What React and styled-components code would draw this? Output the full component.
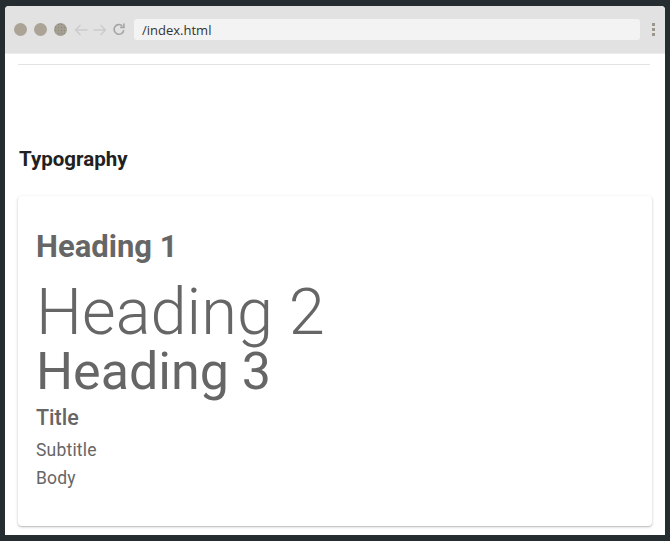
import styled, { createGlobalStyle } from "styled-components";

const GlobalStyle = createGlobalStyle`
  html, body {
    margin: 0;
    padding: 0;
    background: #262d31;
  }
  body {
    font-family: Roboto, "Liberation Sans", sans-serif;
  }
`;

const Page = styled.div`
  height: 541px;
  box-sizing: border-box;
  padding: 6px 5px 6px 5px;
  display: flex;
`;

const Window = styled.div`
  flex: 1;
  display: flex;
  flex-direction: column;
  background: #fff;
  border-radius: 4px 4px 0 0;
  overflow: hidden;
`;

const Toolbar = styled.div`
  height: 48px;
  flex-shrink: 0;
  background: #e2e2e2;
  border-bottom: 1px solid #ececec;
  display: flex;
  align-items: center;
  padding: 0 10px 0 9px;
  box-sizing: border-box;
`;

const Lights = styled.div`
  display: flex;
  gap: 7px;
  margin-right: 7px;
`;

const Light = styled.span`
  width: 13px;
  height: 13px;
  border-radius: 50%;
  background: ${(p) => (p.$dotted ? "#a39d92" : "#aba496")};
  background-image: ${(p) =>
    p.$dotted ? "radial-gradient(#8b857a 0.8px, transparent 1px)" : "none"};
  background-size: 3px 3px;
`;

const Nav = styled.div`
  display: flex;
  align-items: center;
  gap: 5px;
  margin-right: 8px;
`;

const NavButton = styled.span`
  display: flex;
  width: 14px;
  height: 16px;
  align-items: center;
  justify-content: center;
  color: ${(p) => p.$color || "#cbcbcb"};
`;

const UrlBar = styled.div`
  flex: 1;
  height: 21px;
  background: #f3f3f3;
  border-radius: 3px;
  display: flex;
  align-items: center;
  padding-left: 8px;
  font-family: "Open Sans", Roboto, sans-serif;
  font-size: 13px;
  color: #333;
`;

const MoreDots = styled.div`
  display: flex;
  flex-direction: column;
  gap: 2px;
  margin-left: 12px;
  span {
    width: 3px;
    height: 3px;
    background: #9c968b;
  }
`;

const Content = styled.div`
  flex: 1;
  padding: 10px 13px 0 13px;
`;

const Divider = styled.div`
  height: 1px;
  background: #e3e3e3;
  margin-right: 2px;
`;

const SectionTitle = styled.h2`
  margin: 82px 0 25px 1px;
  font-size: 20.5px;
  line-height: 24px;
  font-weight: 700;
  color: #212121;
`;

const Card = styled.div`
  height: 330px;
  box-sizing: border-box;
  background: #fff;
  border-radius: 4px;
  box-shadow: 0 1px 3px rgba(0, 0, 0, 0.22), 0 1px 1px rgba(0, 0, 0, 0.1);
  padding: 33px 18px;
  color: #666;
`;

const Text = styled.div`
  font-size: ${(p) => p.$size}px;
  line-height: ${(p) => p.$lh}px;
  font-weight: ${(p) => p.$weight || 400};
  margin-top: ${(p) => p.$mt || 0}px;
  letter-spacing: ${(p) => p.$ls || 0}px;
  color: #666;
`;

const BackIcon = () => (
  <svg width="14" height="12" viewBox="0 0 14 12" fill="none" stroke="currentColor" strokeWidth="1.3">
    <path d="M13.5 6H1.5M6.5 1L1.5 6l5 5" />
  </svg>
);

const ForwardIcon = () => (
  <svg width="14" height="12" viewBox="0 0 14 12" fill="none" stroke="currentColor" strokeWidth="1.3">
    <path d="M0.5 6h12M7.5 1l5 5-5 5" />
  </svg>
);

const ReloadIcon = () => (
  <svg width="15" height="15" viewBox="0 0 15 15" fill="none" stroke="currentColor" strokeWidth="1.7">
    <path d="M12.6 8.2A5.2 5.2 0 1 1 11 3.6" />
    <path d="M12.8 1.2v4h-4" strokeLinejoin="miter" />
  </svg>
);

export default function App() {
  return (
    <>
      <GlobalStyle />
      <Page>
        <Window>
          <Toolbar>
            <Lights>
              <Light />
              <Light />
              <Light $dotted />
            </Lights>
            <Nav>
              <NavButton>
                <BackIcon />
              </NavButton>
              <NavButton>
                <ForwardIcon />
              </NavButton>
              <NavButton $color="#a4a4a4">
                <ReloadIcon />
              </NavButton>
            </Nav>
            <UrlBar>/index.html</UrlBar>
            <MoreDots>
              <span />
              <span />
              <span />
            </MoreDots>
          </Toolbar>
          <Content>
            <Divider />
            <SectionTitle>Typography</SectionTitle>
            <Card>
              <Text $size={31} $lh={36} $weight={700}>Heading 1</Text>
              <Text $size={65} $lh={62} $weight={300} $mt={16}>Heading 2</Text>
              <Text $size={52} $lh={52} $mt={3}>Heading 3</Text>
              <Text $size={21.5} $lh={26} $weight={500} $mt={7}>Title</Text>
              <Text $size={17.5} $lh={27} $mt={6} $ls={0.2}>Subtitle</Text>
              <Text $size={17.5} $lh={27} $mt={1} $ls={0.2}>Body</Text>
            </Card>
          </Content>
        </Window>
      </Page>
    </>
  );
}
